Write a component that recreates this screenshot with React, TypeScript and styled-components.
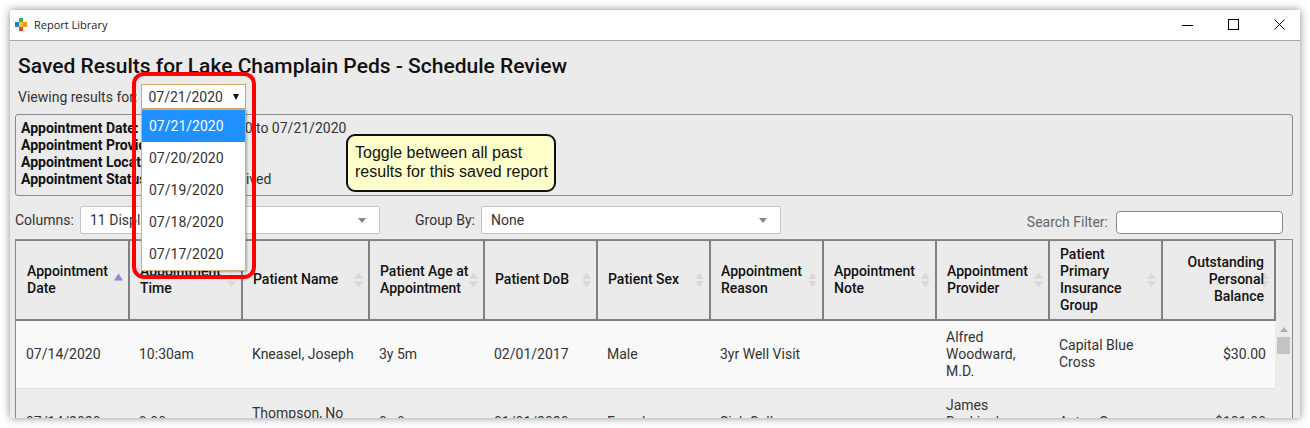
import React from 'react'
import styled, { createGlobalStyle } from 'styled-components'

const GlobalStyle = createGlobalStyle`
  html, body {
    margin: 0;
    padding: 0;
    background: #fff;
    font-family: Roboto, "Liberation Sans", sans-serif;
  }
`

type Col = { label: string; width: number; right?: boolean; sorted?: boolean }

const columns: Col[] = [
  { label: 'Appointment Date', width: 114, sorted: true },
  { label: 'Appointment Time', width: 113 },
  { label: 'Patient Name', width: 127 },
  { label: 'Patient Age at Appointment', width: 115 },
  { label: 'Patient DoB', width: 113 },
  { label: 'Patient Sex', width: 113 },
  { label: 'Appointment Reason', width: 113 },
  { label: 'Appointment Note', width: 113 },
  { label: 'Appointment Provider', width: 113 },
  { label: 'Patient Primary Insurance Group', width: 113 },
  { label: 'Outstanding Personal Balance', width: 113, right: true },
]

const rows = [
  ['07/14/2020', '10:30am', 'Kneasel, Joseph', '3y 5m', '02/01/2017', 'Male', '3yr Well Visit', '', 'Alfred Woodward, M.D.', 'Capital Blue Cross', '$30.00'],
  ['07/14/2020', '9:00am', 'Thompson, No Middle', '0y 8m', '01/01/2020', 'Female', 'Sick Call', '', 'James Buckingham, M.D.', 'Aetna Group', '$101.00'],
]

const dates = ['07/21/2020', '07/20/2020', '07/19/2020', '07/18/2020', '07/17/2020']

const filters = [
  ['Appointment Date:', '07/14/2020 to 07/21/2020'],
  ['Appointment Provider:', 'All'],
  ['Appointment Location:', 'All'],
  ['Appointment Status:', 'Closed, Arrived'],
]

function SortArrows({ active }: { active?: boolean }) {
  return (
    <SortIcon width="9" height="15" viewBox="0 0 9 15">
      {active ? (
        <path d="M4.5 1 L9 8 L0 8 Z" fill="#8a8ad6" />
      ) : (
        <>
          <path d="M4.5 0 L9 6.5 L0 6.5 Z" fill="#d9d9d9" />
          <path d="M4.5 15 L9 8.5 L0 8.5 Z" fill="#d9d9d9" />
        </>
      )}
    </SortIcon>
  )
}

function Logo() {
  return (
    <svg width="12" height="13" viewBox="0 0 12 13">
      <rect x="4" y="0" width="4" height="4" fill="#3fae5a" />
      <rect x="0" y="4" width="4" height="5" fill="#1f7fc4" />
      <rect x="8" y="4" width="4" height="5" fill="#f5921e" />
      <rect x="4" y="4" width="4" height="5" fill="#fbc02d" />
      <rect x="4" y="9" width="4" height="4" fill="#e8452c" />
    </svg>
  )
}

export default function App() {
  return (
    <>
      <GlobalStyle />
      <Page>
        <Window>
          <TitleBar>
            <TitleLeft>
              <Logo />
              <span>Report Library</span>
            </TitleLeft>
            <WindowButtons>
              <svg width="11" height="11" viewBox="0 0 11 11"><path d="M0 6.5H11" stroke="#000" strokeWidth="1" /></svg>
              <svg width="11" height="11" viewBox="0 0 11 11"><rect x="0.5" y="0.5" width="10" height="10" fill="none" stroke="#000" /></svg>
              <svg width="11" height="11" viewBox="0 0 11 11"><path d="M0.5 0.5L10.5 10.5M10.5 0.5L0.5 10.5" stroke="#000" strokeWidth="1" /></svg>
            </WindowButtons>
          </TitleBar>
          <Content>
            <Heading>Saved Results for Lake Champlain Peds - Schedule Review</Heading>
            <ViewingRow>
              <span>Viewing results for:</span>
              <DateSelect>
                <span>07/21/2020</span>
                <BlackCaret />
              </DateSelect>
            </ViewingRow>
            <FilterBox>
              {filters.map(([label, value]) => (
                <FilterLine key={label}>
                  <FilterLabel>{label}</FilterLabel>
                  <span>{value}</span>
                </FilterLine>
              ))}
            </FilterBox>
            <ControlsRow>
              <ControlLabel>Columns:</ControlLabel>
              <Select $width={300}>
                <span>11 Displayed</span>
                <GreyCaret />
              </Select>
              <GroupLabel>Group By:</GroupLabel>
              <Select $width={300}>
                <span>None</span>
                <GreyCaret />
              </Select>
              <SearchArea>
                <SearchLabel>Search Filter:</SearchLabel>
                <SearchInput />
              </SearchArea>
            </ControlsRow>
            <TableBox>
              <HeaderRow>
                {columns.map((c) => (
                  <HeaderCell key={c.label} $width={c.width} $right={c.right}>
                    <HeaderText $right={c.right}>{c.label}</HeaderText>
                    <SortSlot><SortArrows active={c.sorted} /></SortSlot>
                  </HeaderCell>
                ))}
              </HeaderRow>
              <ScrollTrack>
                <ArrowUp />
                <Thumb />
              </ScrollTrack>
              {rows.map((r, i) => (
                <BodyRow key={i} $alt={i % 2 === 1}>
                  {r.map((v, j) => (
                    <BodyCell key={j} $width={columns[j].width} $right={columns[j].right}>{v}</BodyCell>
                  ))}
                </BodyRow>
              ))}
            </TableBox>
          </Content>
          <DateMenu>
            {dates.map((d, i) => (
              <DateOption key={d} $active={i === 0}>{d}</DateOption>
            ))}
          </DateMenu>
          <RedOutline />
          <Callout>Toggle between all past<br />results for this saved report</Callout>
        </Window>
      </Page>
    </>
  )
}

const Page = styled.div`
  width: 1310px;
  height: 428px;
  padding: 10px;
  box-sizing: border-box;
  overflow: hidden;
`

const Window = styled.div`
  position: relative;
  width: 1290px;
  height: 408px;
  background: #ebebeb;
  overflow: hidden;
  box-shadow: 0 0 8px rgba(0, 0, 0, 0.45);
`

const TitleBar = styled.div`
  height: 28px;
  background: #fff;
  border-bottom: 1px solid #a8a8a8;
  display: flex;
  align-items: center;
  justify-content: space-between;
  padding: 0 15px 2px 5px;
`

const TitleLeft = styled.div`
  display: flex;
  align-items: center;
  gap: 7px;
  font-family: "Open Sans", sans-serif;
  font-size: 11px;
  color: #222;
`

const WindowButtons = styled.div`
  display: flex;
  align-items: center;
  gap: 35px;
`

const Content = styled.div`
  padding: 11px 7px 0 5px;
`

const Heading = styled.h1`
  margin: 0 0 0 3px;
  font-size: 21px;
  line-height: 28px;
  font-weight: 500;
  color: #111;
`

const ViewingRow = styled.div`
  display: flex;
  align-items: center;
  height: 25px;
  margin: 4px 0 0 3px;
  font-size: 14px;
  color: #333;
`

const DateSelect = styled.div`
  box-sizing: border-box;
  width: 105px;
  height: 25px;
  margin-left: 4px;
  padding: 0 6px;
  background: #fff;
  border: 1px solid #cfa65a;
  display: flex;
  align-items: center;
  justify-content: space-between;
  font-size: 14px;
  color: #333;
`

const BlackCaret = styled.i`
  width: 0;
  height: 0;
  border-left: 3.5px solid transparent;
  border-right: 3.5px solid transparent;
  border-top: 6px solid #111;
`

const FilterBox = styled.div`
  box-sizing: border-box;
  height: 82px;
  margin-top: 5px;
  padding: 5px 5px;
  border: 1px solid #8a8a8a;
  border-radius: 3px;
  font-size: 14px;
  line-height: 17px;
  color: #333;
`

const FilterLine = styled.div`
  display: flex;
`

const FilterLabel = styled.b`
  flex: 0 0 157px;
  font-weight: 700;
  color: #111;
`

const ControlsRow = styled.div`
  display: flex;
  align-items: center;
  height: 28px;
  margin-top: 10px;
`

const ControlLabel = styled.span`
  font-size: 14px;
  color: #333;
  width: 65px;
`

const GroupLabel = styled.span`
  font-size: 14px;
  color: #333;
  margin: 0 6px 0 35px;
`

const Select = styled.div<{ $width: number }>`
  box-sizing: border-box;
  width: ${(p) => p.$width}px;
  height: 28px;
  padding: 0 13px 0 9px;
  background: #fff;
  border: 1px solid #c4c4c4;
  border-radius: 2px;
  display: flex;
  align-items: center;
  justify-content: space-between;
  font-size: 14px;
  color: #333;
`

const GreyCaret = styled.i`
  width: 0;
  height: 0;
  border-left: 4px solid transparent;
  border-right: 4px solid transparent;
  border-top: 5px solid #888;
`

const SearchArea = styled.div`
  margin-left: auto;
  margin-right: 10px;
  display: flex;
  align-items: center;
  gap: 8px;
  padding-top: 5px;
`

const SearchLabel = styled.span`
  font-size: 14px;
  color: #666;
  margin-bottom: 2px;
`

const SearchInput = styled.div`
  box-sizing: border-box;
  width: 167px;
  height: 23px;
  background: #fff;
  border: 1px solid #888;
  border-radius: 4px;
`

const TableBox = styled.div`
  position: relative;
  margin-top: 5px;
  border: 1px solid #8a8a8a;
  box-sizing: border-box;
  height: 200px;
  overflow: hidden;
`

const HeaderRow = styled.div`
  display: flex;
  height: 81px;
  width: 1260px;
  box-sizing: border-box;
  border-top: 1px solid #808080;
  border-bottom: 2px solid #808080;
  background: #ebebeb;
`

const HeaderCell = styled.div<{ $width: number; $right?: boolean }>`
  position: relative;
  box-sizing: border-box;
  flex: 0 0 ${(p) => p.$width}px;
  min-width: 0;
  display: flex;
  align-items: center;
  justify-content: ${(p) => (p.$right ? 'flex-end' : 'flex-start')};
  padding: ${(p) => (p.$right ? '0 10px 0.4px 6px' : '0 10px 0.4px 10px')};
  border-right: 2px solid #808080;
  font-size: 14px;
  font-weight: 500;
  line-height: 17px;
  color: #111;

  &:first-child {
    padding-left: 11px;
  }
`

const HeaderText = styled.span<{ $right?: boolean }>`
  position: relative;
  z-index: 1;
  text-align: ${(p) => (p.$right ? 'right' : 'left')};
`

const SortSlot = styled.span`
  position: absolute;
  right: 5px;
  top: 50%;
  transform: translateY(-50%);
  display: flex;
`

const SortIcon = styled.svg`
  display: block;
`

const BodyRow = styled.div<{ $alt?: boolean }>`
  display: flex;
  width: 1260px;
  height: 68px;
  box-sizing: border-box;
  background: ${(p) => (p.$alt ? '#ededed' : '#f9f9f9')};
  border-bottom: 1px solid #dedede;
`

const BodyCell = styled.div<{ $width: number; $right?: boolean }>`
  box-sizing: border-box;
  flex: 0 0 ${(p) => p.$width}px;
  min-width: 0;
  display: flex;
  align-items: center;
  justify-content: ${(p) => (p.$right ? 'flex-end' : 'flex-start')};
  padding: 0 10px 0.4px 9px;
  font-size: 14px;
  line-height: 17px;
  color: #333;

  &:first-child {
    padding-left: 10px;
  }
`

const ScrollTrack = styled.div`
  position: absolute;
  top: 81px;
  right: 0;
  width: 17px;
  bottom: 0;
  background: #ececec;
`

const ArrowUp = styled.i`
  position: absolute;
  top: 6px;
  left: 5px;
  width: 0;
  height: 0;
  border-left: 4px solid transparent;
  border-right: 4px solid transparent;
  border-bottom: 5px solid #b0b0b0;
`

const Thumb = styled.div`
  position: absolute;
  top: 16px;
  left: 2px;
  width: 13px;
  height: 17px;
  background: #c4c4c4;
`

const DateMenu = styled.div`
  position: absolute;
  z-index: 2;
  left: 131px;
  top: 99px;
  width: 105px;
  box-sizing: border-box;
  background: #fff;
  border: 1px solid #c9b48a;
  box-shadow: 1px 1px 2px rgba(0, 0, 0, 0.3);
`

const DateOption = styled.div<{ $active?: boolean }>`
  height: 32px;
  padding-left: 7px;
  display: flex;
  align-items: center;
  font-size: 14px;
  color: ${(p) => (p.$active ? '#fff' : '#333')};
  background: ${(p) => (p.$active ? '#1e90ff' : '#fff')};
`

const RedOutline = styled.div`
  position: absolute;
  z-index: 3;
  left: 122px;
  top: 62px;
  width: 124px;
  height: 207px;
  box-sizing: border-box;
  border: 4px solid #ff0000;
  border-radius: 12px;
`

const Callout = styled.div`
  position: absolute;
  z-index: 3;
  left: 336px;
  top: 124px;
  width: 210px;
  height: 58px;
  box-sizing: border-box;
  padding: 7px 0 0 7px;
  background: #ffffcc;
  border: 2px solid #111;
  border-radius: 9px;
  font-family: "Liberation Sans", Arial, sans-serif;
  font-size: 16px;
  line-height: 19px;
  color: #111;
`
